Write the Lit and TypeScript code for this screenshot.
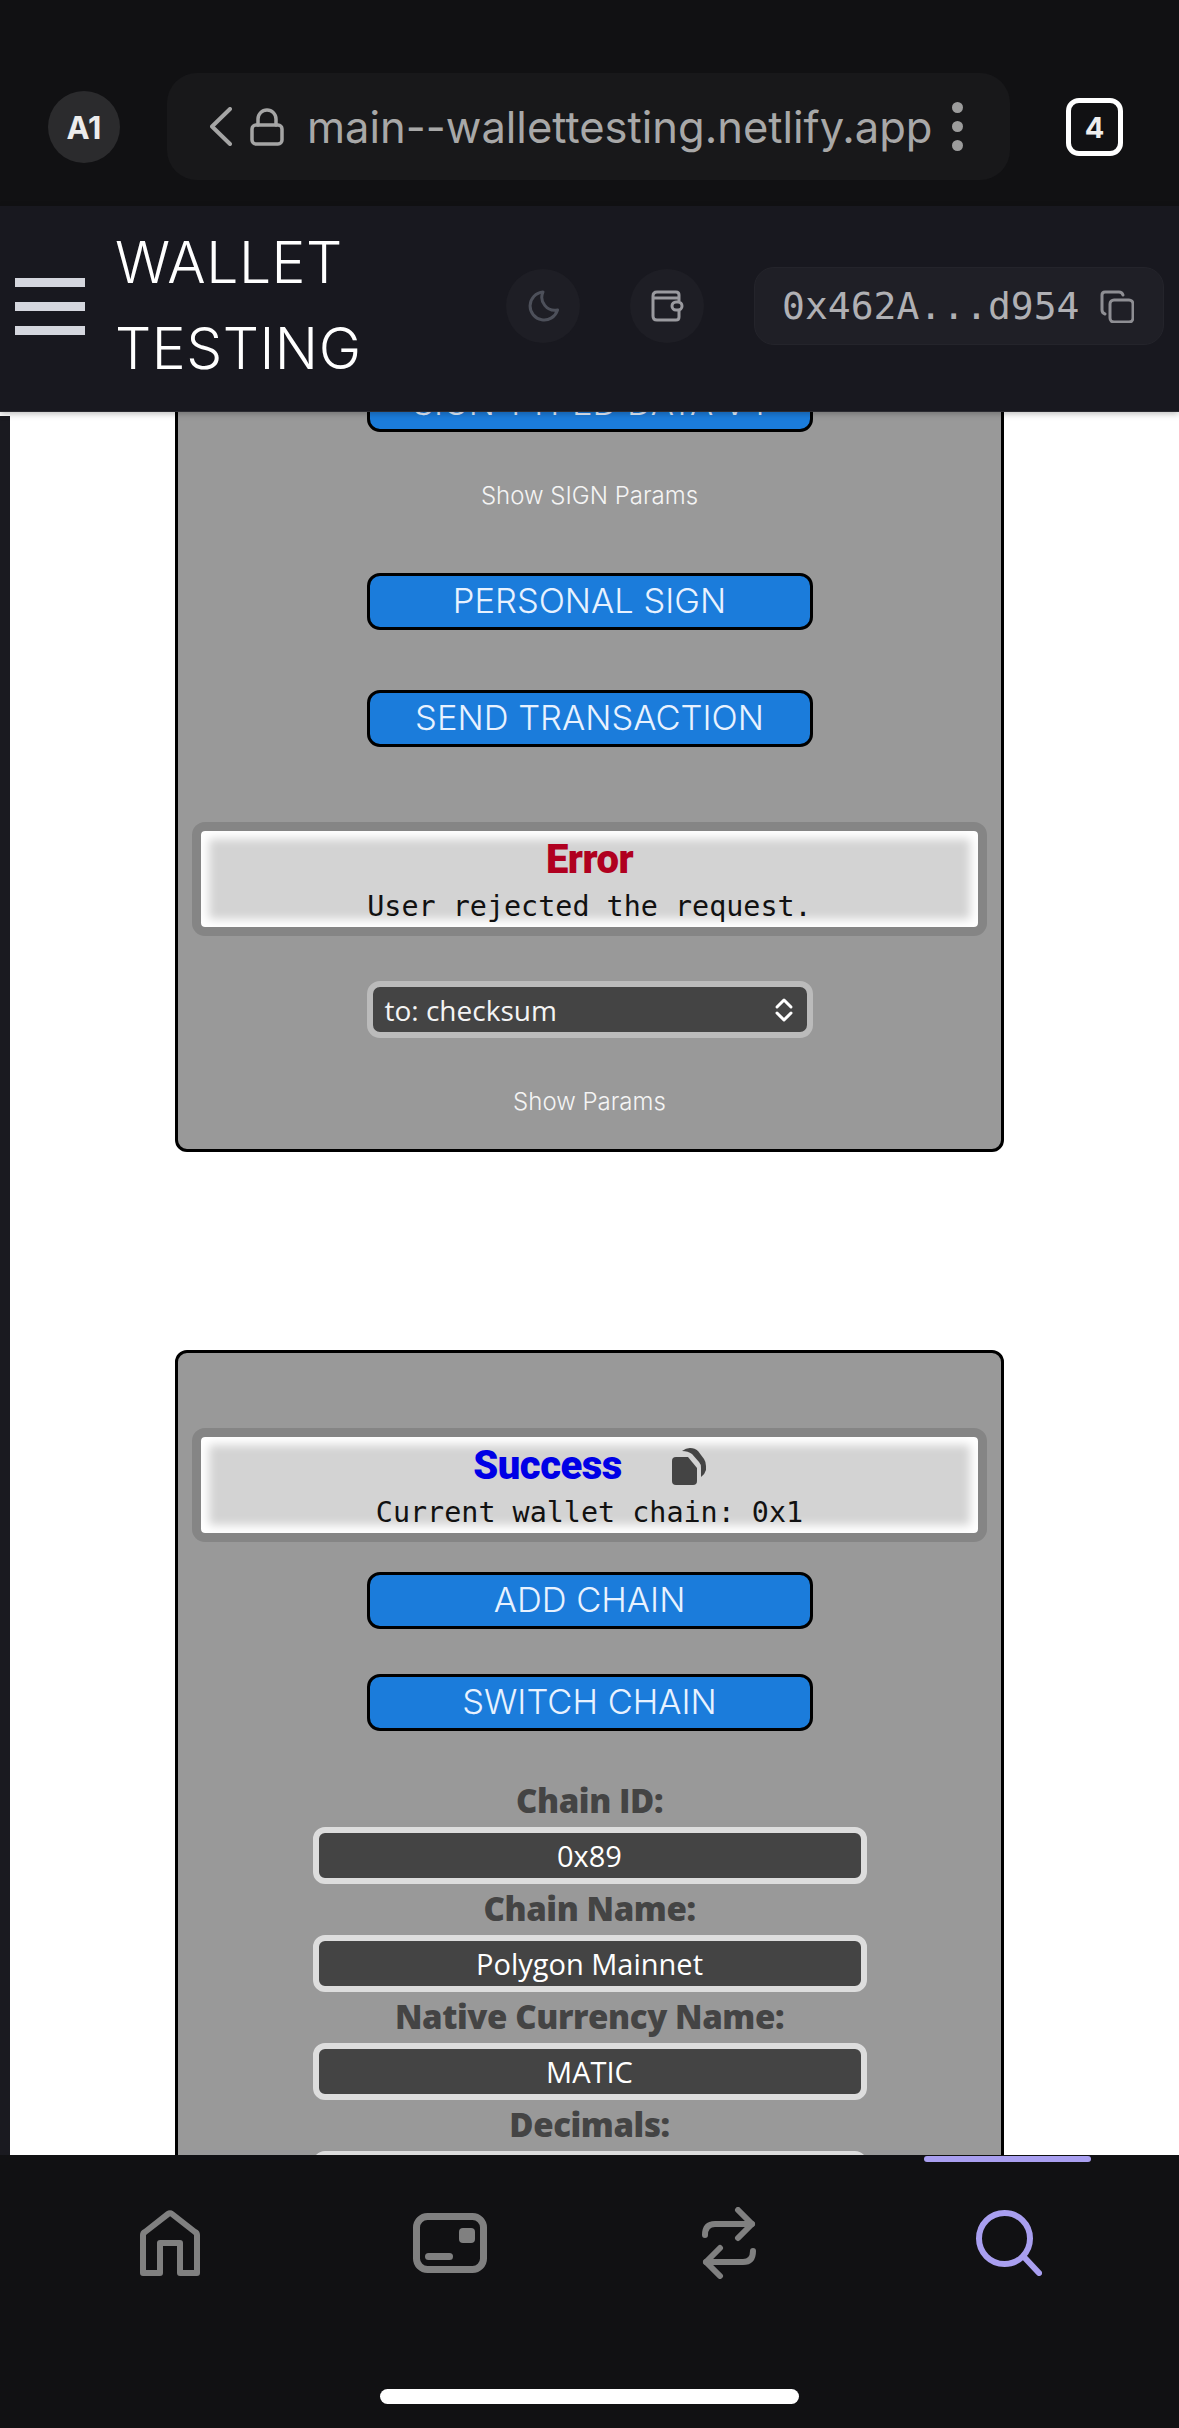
import { LitElement, html, css } from "lit";
import { customElement } from "lit/decorators.js";

@customElement("app-root")
export class AppRoot extends LitElement {
  static styles = css`
    :host { display: flex; flex-direction: column; width: 1179px; height: 2428px; overflow: hidden; background: #111113; font-family: "Open Sans", sans-serif; }
    svg { display: block; flex: none; }
    .browser { height: 206px; box-sizing: border-box; padding: 73px 0 0 48px; background: #111113; display: flex; align-items: flex-start; flex: none; }
    .avatar { width: 72px; height: 72px; margin-top: 18px; border-radius: 50%; background: #2b2b2d; color: #ececec; font: 700 31px Inter, sans-serif; display: flex; align-items: center; justify-content: center; }
    .url { width: 843px; height: 107px; margin-left: 47px; border-radius: 30px; background: #18181a; display: flex; align-items: center; box-sizing: border-box; padding-left: 43px; color: #a8a8a8; }
    .url .host { font: 400 43.5px Inter, sans-serif; margin-left: 23px; white-space: nowrap; width: 624px; }
    .lock { margin-left: 18px; }
    .dots { display: flex; flex-direction: column; gap: 8px; margin-left: 21px; }
    .dots i { width: 11px; height: 11px; border-radius: 50%; background: #9c9c9c; display: block; }
    .tab { width: 57px; height: 58px; box-sizing: border-box; margin: 25px 0 0 56px; border: 5px solid #fff; border-radius: 13px; color: #eee; font: 700 29px Inter, sans-serif; display: flex; align-items: center; justify-content: center; }

    .head { height: 206px; box-sizing: border-box; padding: 0 15px 5px; background: #18181f; border-bottom: 1px solid #2a2a30; box-shadow: 0 2px 6px rgba(0,0,0,.25); display: flex; align-items: center; flex: none; position: relative; z-index: 2; }
    .burger { width: 70px; display: flex; flex-direction: column; gap: 15px; }
    .burger i { display: block; height: 9px; background: #d4d6de; }
    .title { margin-left: 30px; font: 300 57px/86.5px Inter, sans-serif; color: #fff; width: 260px; letter-spacing: 0.5px; }
    .round { width: 74px; height: 74px; border-radius: 50%; background: #1e1e25; display: flex; align-items: center; justify-content: center; }
    .moon { margin-left: auto; }
    .wal { margin-left: 50px; }
    .addr { margin-left: 50px; width: 410px; height: 78px; box-sizing: border-box; border: 1px solid #24242b; border-radius: 20px; background: #1f1f26; display: flex; align-items: center; padding-left: 27px; color: #b0b0b4; font: 400 38px "DejaVu Sans Mono", monospace; }
    .addr svg { margin-left: 21px; }

    .main { flex: 1; min-height: 0; overflow: hidden; background: #fff; position: relative; }
    .strip { position: absolute; left: 0; top: 4px; bottom: 0; width: 10px; background: #1a1a20; }
    .scroll { margin-top: -63px; display: flex; flex-direction: column; align-items: center; gap: 198px; }
    .card { width: 829px; box-sizing: border-box; border: 3px solid #000; border-radius: 12px; background: #999; display: flex; flex-direction: column; align-items: center; padding-bottom: 30px; }
    .btn { width: 446px; height: 57px; box-sizing: border-box; border: 3px solid #000; border-radius: 13px; background: #1b7cdb; color: #e8f2ff; font: 300 34.5px Inter, sans-serif; display: flex; align-items: center; justify-content: center; white-space: nowrap; flex: none; padding-bottom: 2px; }
    .link { height: 34px; color: #f4f4f4; font: 300 24px/34px Inter, sans-serif; }
    .alert { width: 795px; height: 114px; box-sizing: border-box; border: 9px solid #858585; border-radius: 13px; flex: none; overflow: hidden; background: #d3d3d3; box-shadow: inset 0 0 10px 8px #fff; padding-top: 6px; text-align: center; }
    .alert-t { display: flex; justify-content: center; align-items: center; gap: 50px; height: 46px; font: 900 40px/46px Roboto, sans-serif; letter-spacing: -0.5px; }
    .err { color: #b00020; }
    .ok { color: #0000e6; }
    .alert-m { margin-top: 5px; font: 400 28.4px/38px "DejaVu Sans Mono", monospace; color: #111; white-space: nowrap; }
    .select { width: 446px; height: 57px; box-sizing: border-box; border: 6px solid #bbb; border-radius: 13px; background: #444; color: #f4f4f4; font: 400 28px "Open Sans", sans-serif; display: flex; align-items: center; justify-content: space-between; padding: 0 13px 0 12px; flex: none; }
    .label { height: 51px; font: 800 33px/49px "Open Sans", sans-serif; color: #444; white-space: nowrap; letter-spacing: -0.4px; flex: none; }
    .input { width: 554px; height: 57px; box-sizing: border-box; border: 6px solid #ddd; border-radius: 12px; background: #444; color: #fff; font: 400 29px "Open Sans", sans-serif; display: flex; align-items: center; justify-content: center; flex: none; }

    .nav { height: 273px; box-sizing: border-box; background: #111113; padding: 52px 30px 0; display: flex; flex-direction: column; align-items: center; flex: none; position: relative; z-index: 2; }
    .tabs { width: 100%; display: grid; grid-template-columns: repeat(4, 1fr); height: 72px; }
    .cell { display: flex; align-items: center; justify-content: center; position: relative; }
    .ind { position: absolute; left: 55px; top: -51px; width: 167px; height: 6px; border-radius: 3px; background: #a99ff0; }
    .pillbar { margin-top: auto; margin-bottom: 24px; width: 419px; height: 15px; border-radius: 8px; background: #fff; }
    .mt23 { margin-top: 23px; } .mt30 { margin-top: 30px; } .mt45 { margin-top: 45px; } .mt47 { margin-top: 47px; } .mt60 { margin-top: 60px; } .mt75 { margin-top: 75px; }
  `;

  private labelled(label: string, value: string) {
    return html`<div class="label">${label}</div><div class="input">${value}</div>`;
  }

  render() {
    return html`
      <div class="browser">
        <div class="avatar">A1</div>
        <div class="url">
          <svg width="22" height="39" viewBox="0 0 22 39" fill="none" stroke="#a5a5a5" stroke-width="4" stroke-linecap="round" stroke-linejoin="round"><path d="M20 2 L2 19.5 L20 37"/></svg>
          <svg class="lock" width="34" height="38" viewBox="0 0 34 38" fill="none" stroke="#a5a5a5" stroke-width="3.5" stroke-linecap="round"><rect x="2" y="17" width="30" height="19" rx="4"/><path d="M8 17 V11 a9 9 0 0 1 18 0 V17"/></svg>
          <div class="host">main--wallettesting.netlify.app</div>
          <div class="dots"><i></i><i></i><i></i></div>
        </div>
        <div class="tab">4</div>
      </div>

      <div class="head">
        <div class="burger"><i></i><i></i><i></i></div>
        <div class="title">WALLET TESTING</div>
        <div class="round moon">
          <svg width="31" height="32" viewBox="0 0 31 32" fill="none" stroke="#4d505a" stroke-width="3" stroke-linejoin="round"><path d="M15 2 A14 14 0 1 0 29.5 20 A13 13 0 0 1 15 2 Z"/></svg>
        </div>
        <div class="round wal">
          <svg width="33" height="32" viewBox="0 0 33 32" fill="none" stroke="#9a9a9f" stroke-width="3" stroke-linejoin="round"><path d="M28 11 V5 Q28 2 25 2 H6 Q2 2 2 6 V26 Q2 30 6 30 H25 Q28 30 28 27 V21"/><path d="M2 8 H28"/><rect x="21" y="12" width="10" height="8" rx="4"/></svg>
        </div>
        <div class="addr">
          <span>0x462A...d954</span>
          <svg width="34" height="33" viewBox="0 0 34 33" fill="none" stroke="#8e8e93" stroke-width="3" stroke-linecap="round"><rect x="10" y="10" width="23" height="22" rx="4"/><path d="M5 24 Q2 23 2 20 V5 Q2 2 5 2 H19 Q22 2 23 5"/></svg>
        </div>
      </div>

      <div class="main">
        <div class="strip"></div>
        <div class="scroll">
          <div class="card">
            <div class="btn mt23">SIGN TYPED DATA V4</div>
            <div class="link mt47">Show SIGN Params</div>
            <div class="btn mt60">PERSONAL SIGN</div>
            <div class="btn mt60">SEND TRANSACTION</div>
            <div class="alert mt75">
              <div class="alert-t"><span class="err">Error</span></div>
              <div class="alert-m">User rejected the request.</div>
            </div>
            <div class="select mt45">
              <span>to: checksum</span>
              <svg width="20" height="26" viewBox="0 0 20 26" fill="none" stroke="#fff" stroke-width="3" stroke-linecap="round" stroke-linejoin="round"><path d="M3 10 L10 3 L17 10"/><path d="M3 16 L10 23 L17 16"/></svg>
            </div>
            <div class="link mt47">Show Params</div>
          </div>

          <div class="card">
            <div class="alert mt75">
              <div class="alert-t">
                <span class="ok">Success</span>
                <svg width="34" height="37" viewBox="0 0 34 37" fill="#444"><path d="M4 9 H16 L25 20 V33 Q25 37 21 37 H4 Q0 37 0 33 V13 Q0 9 4 9 Z"/><path d="M10 3 Q14 0 18 0 Q23 0 26 3 L32 11 Q34 14 34 18 V22 Q33 26 29 29 V20 Q29 16 27 14 L20 6 Q16 3 10 3 Z"/></svg>
              </div>
              <div class="alert-m">Current wallet chain: 0x1</div>
            </div>
            <div class="btn mt30">ADD CHAIN</div>
            <div class="btn mt45">SWITCH CHAIN</div>
            <div class="mt45"></div>
            ${this.labelled("Chain ID:", "0x89")}
            ${this.labelled("Chain Name:", "Polygon Mainnet")}
            ${this.labelled("Native Currency Name:", "MATIC")}
            ${this.labelled("Decimals:", "18")}
          </div>
        </div>
      </div>

      <div class="nav">
        <div class="tabs">
          <div class="cell">
            <svg width="60" height="66" viewBox="0 0 60 66" fill="none" stroke="#808080" stroke-width="6" stroke-linejoin="round"><path d="M3 63 H20 V33 H40 V63 H57 V25 Q57 23 55 22 L32 4 Q30 2.5 28 4 L5 22 Q3 23 3 25 Z"/></svg>
          </div>
          <div class="cell">
            <svg width="74" height="60" viewBox="0 0 74 60" fill="none"><rect x="3.5" y="3.5" width="67" height="53" rx="11" stroke="#808080" stroke-width="7"/><rect x="46" y="15" width="16" height="15" rx="4" fill="#808080"/><rect x="12" y="40" width="28" height="7" rx="3.5" fill="#808080"/></svg>
          </div>
          <div class="cell">
            <svg width="54" height="72" viewBox="0 0 54 72" fill="none" stroke="#808080" stroke-width="6" stroke-linecap="round" stroke-linejoin="round"><path d="M3 28 Q3 17 13 17 H50"/><path d="M36 3 L50 17 L36 31"/><path d="M51 44 Q51 55 41 55 H4"/><path d="M18 41 L4 55 L18 69"/></svg>
          </div>
          <div class="cell">
            <div class="ind"></div>
            <svg width="66" height="66" viewBox="0 0 66 66" fill="none" stroke="#a99ff0" stroke-width="6" stroke-linecap="round"><circle cx="28.5" cy="28.5" r="25.5"/><path d="M48 47 L63 63"/></svg>
          </div>
        </div>
        <div class="pillbar"></div>
      </div>
    `;
  }
}
